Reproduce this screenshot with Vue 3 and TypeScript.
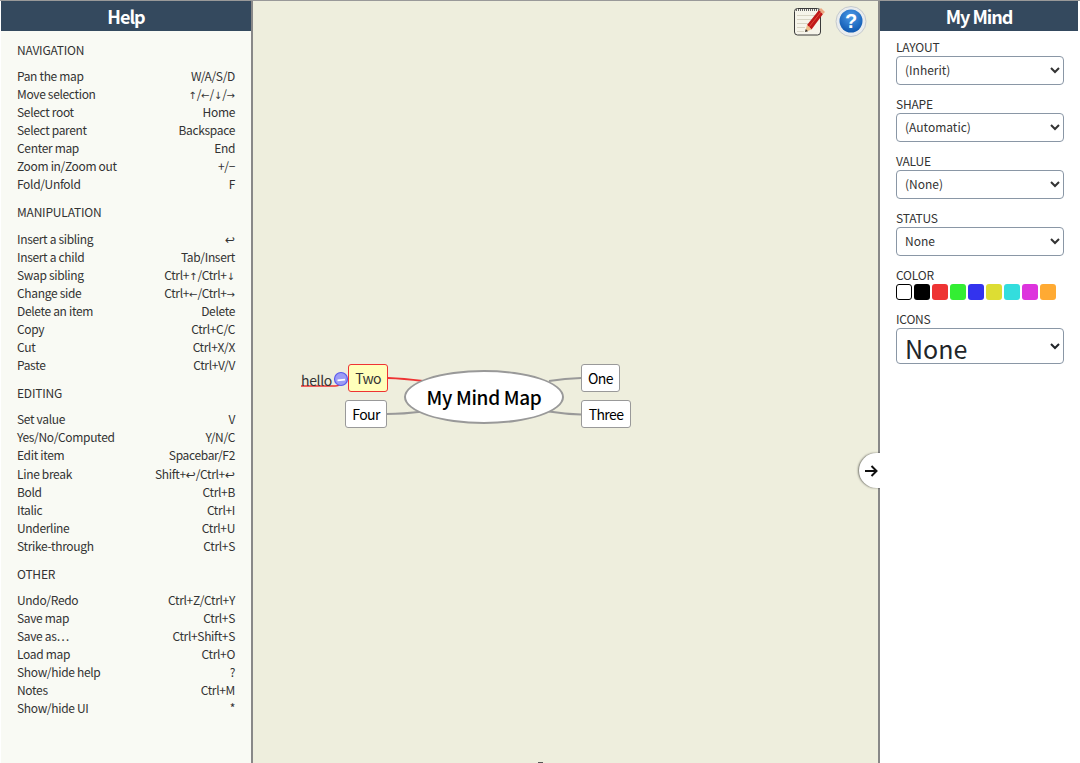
<script setup lang="ts">
interface Row { label: string; keys: string; tall?: boolean }
interface Section { title: string; rows: Row[] }

const sections: Section[] = [
  { title: 'NAVIGATION', rows: [
    { label: 'Pan the map', keys: 'W/A/S/D' },
    { label: 'Move selection', keys: '↑/←/↓/→' },
    { label: 'Select root', keys: 'Home' },
    { label: 'Select parent', keys: 'Backspace' },
    { label: 'Center map', keys: 'End' },
    { label: 'Zoom in/Zoom out', keys: '+/−' },
    { label: 'Fold/Unfold', keys: 'F' },
  ] },
  { title: 'MANIPULATION', rows: [
    { label: 'Insert a sibling', keys: '↩', tall: true },
    { label: 'Insert a child', keys: 'Tab/Insert' },
    { label: 'Swap sibling', keys: 'Ctrl+↑/Ctrl+↓' },
    { label: 'Change side', keys: 'Ctrl+←/Ctrl+→' },
    { label: 'Delete an item', keys: 'Delete' },
    { label: 'Copy', keys: 'Ctrl+C/C' },
    { label: 'Cut', keys: 'Ctrl+X/X' },
    { label: 'Paste', keys: 'Ctrl+V/V' },
  ] },
  { title: 'EDITING', rows: [
    { label: 'Set value', keys: 'V' },
    { label: 'Yes/No/Computed', keys: 'Y/N/C' },
    { label: 'Edit item', keys: 'Spacebar/F2' },
    { label: 'Line break', keys: 'Shift+↩/Ctrl+↩', tall: true },
    { label: 'Bold', keys: 'Ctrl+B' },
    { label: 'Italic', keys: 'Ctrl+I' },
    { label: 'Underline', keys: 'Ctrl+U' },
    { label: 'Strike-through', keys: 'Ctrl+S' },
  ] },
  { title: 'OTHER', rows: [
    { label: 'Undo/Redo', keys: 'Ctrl+Z/Ctrl+Y' },
    { label: 'Save map', keys: 'Ctrl+S' },
    { label: 'Save as…', keys: 'Ctrl+Shift+S' },
    { label: 'Load map', keys: 'Ctrl+O' },
    { label: 'Show/hide help', keys: '?' },
    { label: 'Notes', keys: 'Ctrl+M' },
    { label: 'Show/hide UI', keys: '*' },
  ] },
];

const fields = [
  { label: 'LAYOUT', value: '(Inherit)' },
  { label: 'SHAPE', value: '(Automatic)' },
  { label: 'VALUE', value: '(None)' },
  { label: 'STATUS', value: 'None' },
];

const colors = ['#ffffff', '#000000', '#ee3333', '#33ee33', '#3333ee', '#dddd33', '#33dddd', '#dd33dd', '#ffaa33'];

// arrows come from another font than the letters, so split them out
function parts(keys: string) {
  return keys.split(/([↑←↓→↩])/).filter(Boolean);
}
const isArrow = (p: string) => '↑←↓→↩'.includes(p);
</script>

<template>
  <div class="page">
    <aside class="help">
      <h2 class="bar">Help</h2>
      <div class="help-body">
        <section v-for="s in sections" :key="s.title" class="group">
          <h3>{{ s.title }}</h3>
          <div
            v-for="r in s.rows"
            :key="r.label"
            class="row"
            :class="{ tall: r.tall }"
          >
            <span>{{ r.label }}</span>
            <span><template v-for="(p, i) in parts(r.keys)" :key="i"><span v-if="isArrow(p)" class="arrow" :class="{ enter: p === '↩' }">{{ p }}</span><template v-else>{{ p }}</template></template></span>
          </div>
        </section>
      </div>
    </aside>

    <main class="map">
      <div class="tools">
        <svg class="tool" width="34" height="32" viewBox="0 0 34 32">
          <rect x="2.5" y="3.5" width="26" height="26.5" rx="3" fill="#f6f4ea" stroke="#3a3a3a" />
          <path d="M4 5h24" stroke="#666" stroke-width="2" stroke-dasharray="1 1" />
          <path d="M5 10.5h21M5 14.5h19M5 18.5h12M5 22.5h8M5 26.5h7" stroke="#d8d4c4" />
          <path d="M15 20l4.5 4.5L31 9l-4-4z" fill="#c01818" />
          <path d="M17 22l12-15" stroke="#e04a3a" />
          <path d="M27 5l2-2 4 4-2 2z" fill="#eda882" />
          <path d="M13 27l2-7 4.5 4.5z" fill="#efc089" />
          <path d="M13 27l.8-3 2.2 2.2z" fill="#333" />
        </svg>
        <svg class="tool" width="32" height="32" viewBox="0 0 32 32">
          <defs>
            <radialGradient id="helpBlue" cx="50%" cy="30%" r="70%">
              <stop offset="0" stop-color="#4d9be8" />
              <stop offset="1" stop-color="#0d57b0" />
            </radialGradient>
          </defs>
          <circle cx="16" cy="16.5" r="15" fill="#e9ecee" stroke="#c5cacd" />
          <circle cx="16" cy="16" r="11.5" fill="url(#helpBlue)" />
          <text x="16" y="23" text-anchor="middle" class="qmark">?</text>
        </svg>
      </div>

      <svg class="links" width="625" height="763">
        <path d="M135 378Q150 378.5 170 381" stroke="#ee3333" fill="none" stroke-width="2" />
        <path d="M48 386H82Q86 386 89 383" stroke="#ee3333" fill="none" stroke-width="1.5" />
        <path d="M134 414Q150 414 170 411.5" stroke="#999" fill="none" stroke-width="2" />
        <path d="M328 378Q312 378.5 296 381" stroke="#999" fill="none" stroke-width="2" />
        <path d="M328 414.5Q312 414 296 411.5" stroke="#999" fill="none" stroke-width="2" />
      </svg>

      <div class="root">My Mind Map</div>
      <div class="node two">Two</div>
      <div class="node four">Four</div>
      <div class="node one">One</div>
      <div class="node three">Three</div>
      <div class="hello">hello</div>
      <svg class="noentry" width="16" height="16" viewBox="0 0 16 16">
        <circle cx="8" cy="8" r="6.5" fill="#9c9cf5" stroke="#5a5aee" stroke-width="1.2" />
        <path d="M4.5 10.2l7.5-.8V7.8l-7.5.8z" fill="#fff" />
      </svg>
      <i class="tick"></i>
    </main>

    <aside class="side">
      <h2 class="bar">My Mind</h2>
      <div class="side-body">
        <label v-for="f in fields" :key="f.label" class="field">
          <span>{{ f.label }}</span>
          <select>
            <option>{{ f.value }}</option>
          </select>
        </label>
        <div class="field color">
          <span>COLOR</span>
          <div class="swatches">
            <i
              v-for="(c, i) in colors"
              :key="c"
              :class="{ first: i === 0 }"
              :style="{ backgroundColor: c }"
            ></i>
          </div>
        </div>
        <label class="field">
          <span>ICONS</span>
          <select class="big">
            <option>None</option>
          </select>
        </label>
      </div>
      <button class="toggle" type="button" aria-label="Toggle">
        <svg width="14" height="12" viewBox="0 0 14 12">
          <path d="M1 6h11M7.5 1l5 5-5 5" fill="none" stroke="#111" stroke-width="2" />
        </svg>
      </button>
    </aside>
  </div>
</template>

<style>
html, body { margin: 0; background: #fff; }
</style>

<style scoped>
.page {
  display: flex;
  width: 1080px;
  height: 763px;
  overflow: hidden;
  box-sizing: border-box;
  border-top: 1px solid #999;
  font-family: "Noto Sans CJK SC", sans-serif;
  color: #333;
  background: #fff;
}
.bar {
  margin: 0;
  height: 30px;
  line-height: 30px;
  background: #34495e;
  color: #fff;
  text-align: center;
  font-size: 18px;
  font-weight: 700;
  letter-spacing: -1px;
}
.help {
  width: 250px;
  margin-left: 1px;
  background: #f9faf4;
  border-right: 2px solid #888;
  flex: none;
}
.help-body { padding: 10px 16px 0; }
.group { margin-bottom: 10px; }
.group h3 {
  margin: 0 0 8px;
  height: 18px;
  line-height: 18px;
  font-size: 12px;
  font-weight: 400;
  letter-spacing: -0.2px;
}
.row {
  display: flex;
  justify-content: space-between;
  height: 18px;
  line-height: 18px;
  font-size: 12px;
  letter-spacing: -0.33px;
  white-space: nowrap;
}
.row.tall { height: 19px; padding-top: 1px; box-sizing: border-box; }
.arrow { font-family: "DejaVu Sans", sans-serif; font-size: 10px; letter-spacing: 0; }
.arrow.enter { font-size: 12px; }
.map {
  position: relative;
  flex: 1;
  background: #eeeedd;
  border-right: 2px solid #888;
}
.tools {
  position: absolute;
  top: 4px;
  right: 11px;
  display: flex;
  gap: 9px;
  align-items: center;
}
.qmark {
  font-family: "Liberation Sans", sans-serif;
  font-size: 20px;
  font-weight: 700;
  fill: #fff;
}
.links { position: absolute; left: 0; top: -1px; }
.root {
  position: absolute;
  left: 151px;
  top: 369px;
  width: 160px;
  height: 54px;
  box-sizing: border-box;
  border: 2px solid #999;
  border-radius: 50%;
  background: #fff;
  color: #000;
  text-align: center;
  line-height: 50px;
  font-size: 19px;
  font-weight: 500;
  letter-spacing: -0.3px;
}
.node {
  position: absolute;
  height: 28px;
  box-sizing: border-box;
  border: 1px solid #999;
  border-radius: 3px;
  background: #fff;
  color: #000;
  line-height: 27px;
  text-align: center;
  font-size: 14px;
  letter-spacing: -0.6px;
}
.two { left: 95px; top: 363px; width: 40px; background: #ffffbb; border-color: #ee3333; color: #333; }
.four { left: 92px; top: 399px; width: 42px; }
.one { left: 328px; top: 363px; width: 39px; }
.three { left: 328px; top: 399px; width: 50px; }
.hello {
  position: absolute;
  left: 48px;
  top: 369px;
  line-height: 20px;
  font-size: 14px;
  letter-spacing: -0.35px;
}
.noentry { position: absolute; left: 80px; top: 370px; }
.tick {
  position: absolute;
  left: 285px;
  bottom: 0;
  width: 5px;
  height: 1px;
  background: #555;
}
.side {
  position: relative;
  width: 198px;
  flex: none;
  margin-right: 2px;
  background: #fff;
}
.side-body { padding: 8px 14px 0 16px; }
.field {
  display: block;
  margin-bottom: 11px;
  font-size: 12px;
  letter-spacing: -0.2px;
}
.field > span { display: block; height: 17px; line-height: 15px; }
.field select {
  display: block;
  width: 168px;
  height: 29px;
  padding: 0 4px 2px;
  border: 1px solid #8a97a6;
  border-radius: 4px;
  background-color: #fff;
  color: #333;
  font: 12px "Noto Sans CJK SC", sans-serif;
}
.field select.big {
  height: 36px;
  font-size: 25px;
  color: #212529;
}
.swatches { display: flex; gap: 2px; }
.swatches i {
  display: block;
  width: 16px;
  height: 16px;
  box-sizing: border-box;
  border-radius: 3px;
}
.swatches i.first { border: 1px solid #000; }
.toggle {
  position: absolute;
  left: -21px;
  top: 452px;
  width: 30px;
  height: 35px;
  padding: 0 0 0 5px;
  border: 0;
  border-radius: 18px 0 0 18px;
  background: #fff;
  box-shadow: -1px 0 2px rgba(0, 0, 0, 0.5);
  clip-path: inset(-4px 9px -4px -4px);
  text-align: left;
}
.toggle svg { display: block; }
</style>
